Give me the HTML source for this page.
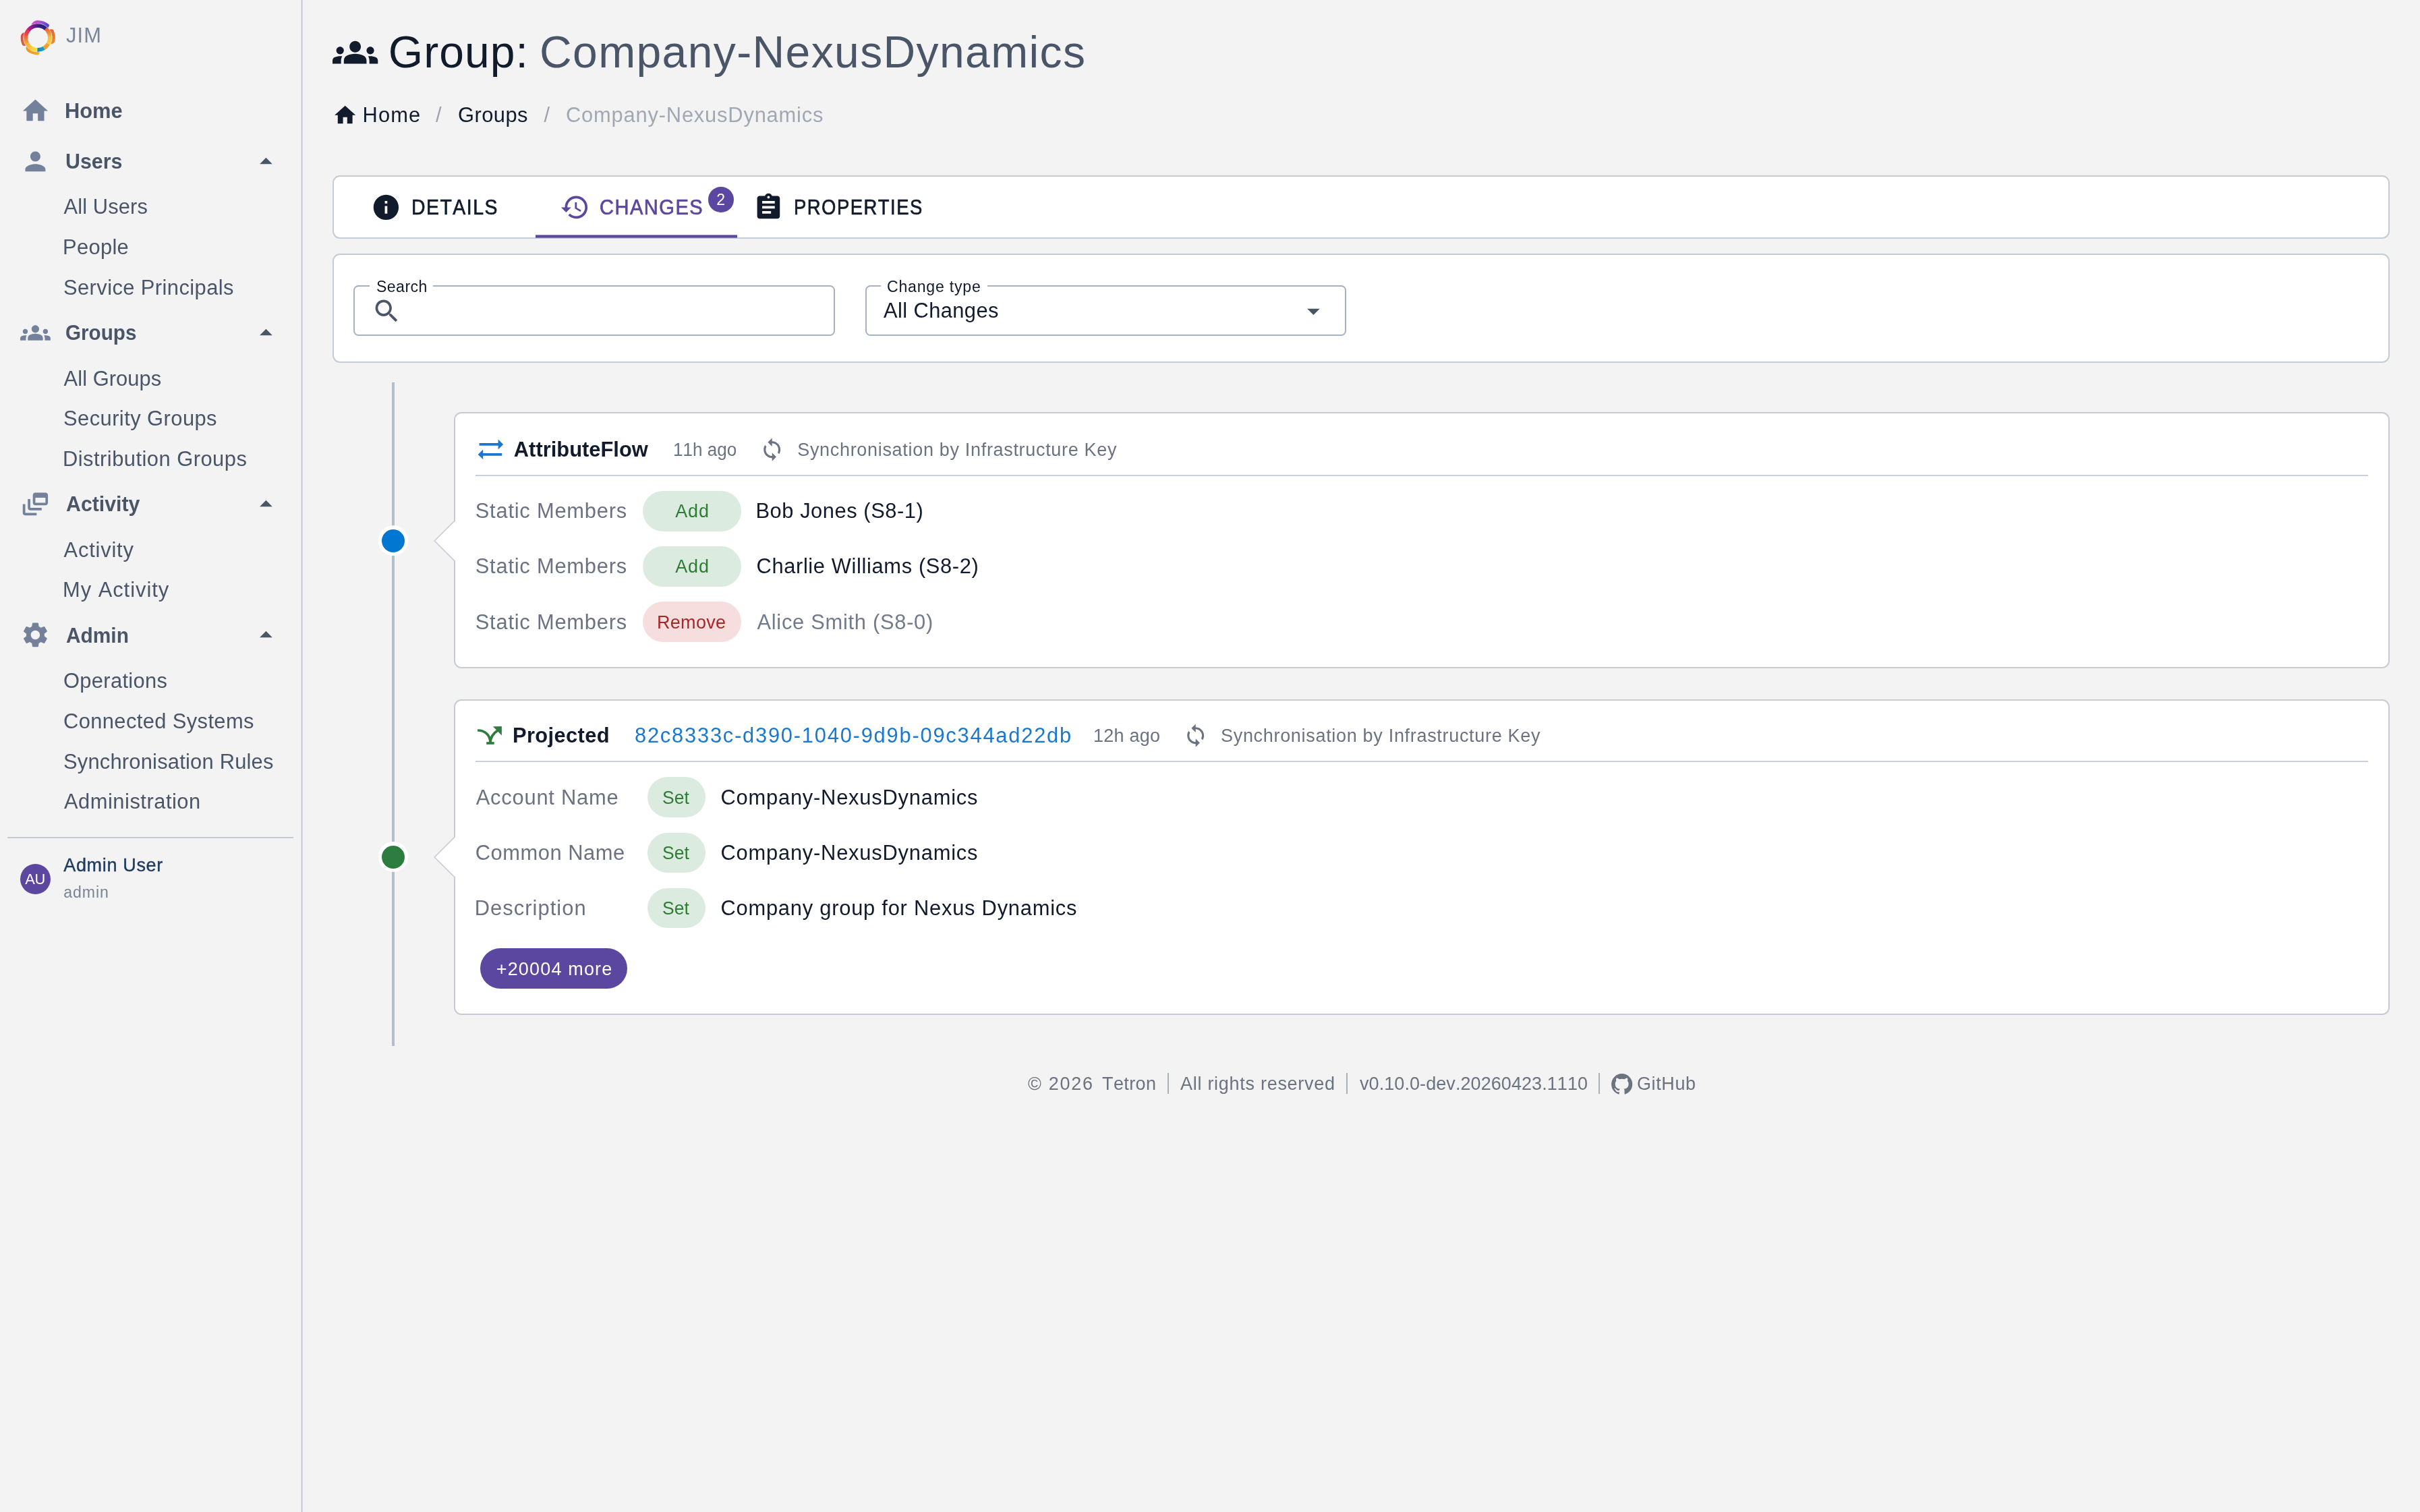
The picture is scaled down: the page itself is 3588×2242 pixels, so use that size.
<!DOCTYPE html><html lang="en"><head><meta charset="utf-8"><title>Group: Company-NexusDynamics - JIM</title><style>
html,body{margin:0;padding:0}
body{width:3588px;height:2242px;background:#f3f3f3;position:relative;overflow:hidden;font-family:"Liberation Sans",sans-serif;font-kerning:none}
#root{position:absolute;left:0;top:0;width:100%;height:100%;will-change:transform}
.a,.t,.i{position:absolute}
.t{white-space:nowrap;line-height:1;font-weight:400;transform-origin:0 0}
.b{font-weight:700}
.sb{-webkit-text-stroke:0.4px currentColor}
.tb{-webkit-text-stroke:0.7px currentColor}
.i{display:block;overflow:visible}
</style></head><body><div id="root">
<nav>
<div class="a" style="left:446.00px;top:0.00px;width:1.00px;height:2242.00px;background:rgba(190,197,210,0.38)"></div>
<div class="a" style="left:447.00px;top:0.00px;width:1.00px;height:2242.00px;background:#bec5d2"></div>
<div class="a" style="left:448.00px;top:0.00px;width:1.00px;height:2242.00px;background:rgba(190,197,210,0.48)"></div>
<div class="a" style="left:11.00px;top:1241.00px;width:424.00px;height:2.00px;background:#c4c9d4"></div>
<div class="a" style="left:29.90px;top:1281.00px;width:45.00px;height:45.00px;background:#5b47a0;border-radius:50%"></div>
<svg class="i" style="left:0;top:0" width="120" height="120" viewBox="0 0 120 120"><defs><linearGradient id="lg1" gradientUnits="userSpaceOnUse" x1="46.66" y1="36.86" x2="71.32" y2="41.20"><stop offset="0" stop-color="#e83cc6"/><stop offset="0.5" stop-color="#a456d6"/><stop offset="1" stop-color="#4c44c8"/></linearGradient><linearGradient id="lg2" gradientUnits="userSpaceOnUse" x1="73.53" y1="43.73" x2="75.23" y2="65.38"><stop offset="0" stop-color="#e2642f"/><stop offset="0.5" stop-color="#e8782c"/><stop offset="1" stop-color="#ef8c2c"/></linearGradient><linearGradient id="lg3" gradientUnits="userSpaceOnUse" x1="58.60" y1="77.14" x2="38.99" y2="68.82"><stop offset="0" stop-color="#f4a82c"/><stop offset="1" stop-color="#ee9228"/></linearGradient><linearGradient id="lg4" gradientUnits="userSpaceOnUse" x1="37.97" y1="67.71" x2="35.93" y2="48.30"><stop offset="0" stop-color="#da643a"/><stop offset="1" stop-color="#d74a3c"/></linearGradient><linearGradient id="lg5" gradientUnits="userSpaceOnUse" x1="40.50" y1="64.95" x2="42.49" y2="44.26"><stop offset="0" stop-color="#f4a838"/><stop offset="0.45" stop-color="#ee7040"/><stop offset="0.75" stop-color="#e93c4a"/><stop offset="1" stop-color="#e8354c"/></linearGradient><linearGradient id="lg6" gradientUnits="userSpaceOnUse" x1="55.38" y1="73.89" x2="40.50" y2="64.95"><stop offset="0" stop-color="#fce242"/><stop offset="0.5" stop-color="#f9cf3e"/><stop offset="1" stop-color="#f5b038"/></linearGradient><linearGradient id="lg7" gradientUnits="userSpaceOnUse" x1="65.49" y1="71.18" x2="55.38" y2="73.89"><stop offset="0" stop-color="#1fa3c4"/><stop offset="1" stop-color="#1487ba"/></linearGradient><linearGradient id="lg8" gradientUnits="userSpaceOnUse" x1="71.50" y1="64.95" x2="65.49" y2="71.18"><stop offset="0" stop-color="#f0a22c"/><stop offset="1" stop-color="#efa02c"/></linearGradient><linearGradient id="lg9" gradientUnits="userSpaceOnUse" x1="67.51" y1="42.29" x2="71.50" y2="64.95"><stop offset="0" stop-color="#e85c3c"/><stop offset="0.3" stop-color="#ef8a3a"/><stop offset="0.6" stop-color="#f7bf3c"/><stop offset="1" stop-color="#f8cc40"/></linearGradient><linearGradient id="lg10" gradientUnits="userSpaceOnUse" x1="42.09" y1="44.74" x2="67.74" y2="42.49"><stop offset="0" stop-color="#c4198c"/><stop offset="0.3" stop-color="#6a1e88"/><stop offset="0.65" stop-color="#2e2080"/><stop offset="1" stop-color="#2c2384"/></linearGradient></defs><path d="M46.66 36.86Q48.02 31.88 54.21 30.36A25.7 25.7 0 0 1 72.52 36.31Q73.61 37.70 71.32 41.20A21.1 21.1 0 0 0 46.66 36.86Z" fill="url(#lg1)"/><path d="M73.53 43.73Q77.58 42.41 78.99 44.29A25.8 25.8 0 0 1 81.24 61.36Q79.79 65.18 75.23 65.38A21.2 21.2 0 0 0 73.53 43.73Z" fill="url(#lg2)"/><path d="M58.60 77.14Q58.14 81.01 56.44 81.40A25.4 25.4 0 0 1 40.71 76.29Q37.52 72.99 38.99 68.82A21.1 21.1 0 0 0 58.60 77.14Z" fill="url(#lg3)"/><path d="M37.97 67.71Q34.39 68.58 33.07 66.69A25.3 25.3 0 0 1 30.89 52.92Q31.98 49.07 35.93 48.30A21.3 21.3 0 0 0 37.97 67.71Z" fill="url(#lg4)"/><path d="M40.50 64.95A17.9 17.9 0 0 1 42.49 44.26" stroke="url(#lg5)" stroke-width="5.8" fill="none"/><path d="M55.38 73.89A17.9 17.9 0 0 1 40.50 64.95" stroke="url(#lg6)" stroke-width="5.8" fill="none"/><path d="M65.49 71.18A17.9 17.9 0 0 1 55.38 73.89" stroke="url(#lg7)" stroke-width="5.8" fill="none"/><path d="M71.50 64.95A17.9 17.9 0 0 1 65.49 71.18" stroke="url(#lg8)" stroke-width="5.8" fill="none"/><path d="M67.51 42.29A17.9 17.9 0 0 1 71.50 64.95" stroke="url(#lg9)" stroke-width="5.8" fill="none"/><path d="M42.09 44.74A17.9 17.9 0 0 1 67.74 42.49" stroke="url(#lg10)" stroke-width="5.8" fill="none"/></svg>
<svg class="i" style="left:29.98px;top:142.02px" width="44.85" height="44.85" viewBox="0 0 24 24"><path fill="#73829a" d="M10 20v-6h4v6h5v-8h3L12 3 2 12h3v8z"/></svg>
<svg class="i" style="left:29.98px;top:216.77px" width="44.85" height="44.85" viewBox="0 0 24 24"><path fill="#73829a" d="M12 12c2.21 0 4-1.79 4-4s-1.79-4-4-4-4 1.79-4 4 1.79 4 4 4zm0 2c-2.67 0-8 1.34-8 4v2h16v-2c0-2.66-5.33-4-8-4z"/></svg>
<svg class="i" style="left:29.98px;top:470.92px" width="44.85" height="44.85" viewBox="0 0 24 24"><path fill="#73829a" d="M12 12.75c1.63 0 3.07.39 4.24.9 1.08.48 1.76 1.56 1.76 2.73V18H6v-1.61c0-1.18.68-2.26 1.76-2.73 1.17-.52 2.61-.91 4.24-.91zM4 13c1.1 0 2-.9 2-2s-.9-2-2-2-2 .9-2 2 .9 2 2 2zm1.13 1.1c-.37-.06-.74-.1-1.13-.1-.99 0-1.93.21-2.78.58C.48 14.9 0 15.62 0 16.43V18h4.5v-1.61c0-.83.23-1.61.63-2.29zM20 13c1.1 0 2-.9 2-2s-.9-2-2-2-2 .9-2 2 .9 2 2 2zm4 3.43c0-.81-.48-1.53-1.22-1.85-.85-.37-1.79-.58-2.78-.58-.39 0-.76.04-1.13.1.4.68.63 1.46.63 2.29V18H24v-1.57zM12 6c1.66 0 3 1.34 3 3s-1.34 3-3 3-3-1.34-3-3 1.34-3 3-3z"/></svg>
<svg class="i" style="left:29.98px;top:725.08px" width="44.85" height="44.85" viewBox="0 0 24 24"><path fill="#73829a" d="M8 8H6v7c0 1.1.9 2 2 2h9v-2H8V8zM20 3h-8c-1.1 0-2 .9-2 2v6c0 1.1.9 2 2 2h8c1.1 0 2-.9 2-2V5c0-1.1-.9-2-2-2zm0 8h-8V7h8v4zM4 12H2v7c0 1.1.9 2 2 2h9v-2H4v-7z"/></svg>
<svg class="i" style="left:29.98px;top:919.42px" width="44.85" height="44.85" viewBox="0 0 24 24"><path fill="#73829a" d="M19.14 12.94c.04-.3.06-.61.06-.94 0-.32-.02-.64-.07-.94l2.03-1.58c.18-.14.23-.41.12-.61l-1.92-3.32c-.12-.22-.37-.29-.59-.22l-2.39.96c-.5-.38-1.03-.7-1.62-.94l-.36-2.54c-.04-.24-.24-.41-.48-.41h-3.84c-.24 0-.43.17-.47.41l-.36 2.54c-.59.24-1.13.57-1.62.94l-2.39-.96c-.22-.08-.47 0-.59.22L2.74 8.87c-.12.21-.08.47.12.61l2.03 1.58c-.05.3-.09.63-.09.94s.02.64.07.94l-2.03 1.58c-.18.14-.23.41-.12.61l1.92 3.32c.12.22.37.29.59.22l2.39-.96c.5.38 1.03.7 1.62.94l.36 2.54c.05.24.24.41.48.41h3.84c.24 0 .44-.17.47-.41l.36-2.54c.59-.24 1.13-.56 1.62-.94l2.39.96c.22.08.47 0 .59-.22l1.92-3.32c.12-.22.07-.47-.12-.61l-2.01-1.58zM12 15.6c-1.98 0-3.6-1.62-3.6-3.6s1.62-3.6 3.6-3.6 3.6 1.62 3.6 3.6-1.62 3.6-3.6 3.6z"/></svg>
<svg class="i" style="left:371.88px;top:216.77px" width="44.85" height="44.85" viewBox="0 0 24 24"><path fill="#4a5568" d="M7 14l5-5 5 5z"/></svg>
<svg class="i" style="left:371.88px;top:470.92px" width="44.85" height="44.85" viewBox="0 0 24 24"><path fill="#4a5568" d="M7 14l5-5 5 5z"/></svg>
<svg class="i" style="left:371.88px;top:725.08px" width="44.85" height="44.85" viewBox="0 0 24 24"><path fill="#4a5568" d="M7 14l5-5 5 5z"/></svg>
<svg class="i" style="left:371.88px;top:919.42px" width="44.85" height="44.85" viewBox="0 0 24 24"><path fill="#4a5568" d="M7 14l5-5 5 5z"/></svg>
<span class="t" style="left:98.00px;top:38.00px;font-size:30.86px;letter-spacing:1.148px;color:#7a869a">JIM</span>
<span class="t b" style="left:96.10px;top:150.00px;font-size:30.86px;letter-spacing:-0.092px;color:#4a5568">Home</span>
<span class="t b" style="left:97.11px;top:225.00px;font-size:30.86px;letter-spacing:0.000px;color:#4a5568;transform:scaleX(0.9854)">Users</span>
<span class="t b" style="left:97.14px;top:479.00px;font-size:30.86px;letter-spacing:0.000px;color:#4a5568;transform:scaleX(0.9604)">Groups</span>
<span class="t b" style="left:98.10px;top:733.00px;font-size:30.86px;letter-spacing:0.000px;color:#4a5568;transform:scaleX(0.9819)">Activity</span>
<span class="t b" style="left:98.10px;top:928.00px;font-size:30.86px;letter-spacing:0.000px;color:#4a5568;transform:scaleX(0.9676)">Admin</span>
<span class="t" style="left:94.60px;top:292.00px;font-size:30.86px;letter-spacing:0.097px;color:#4a5568">All Users</span>
<span class="t" style="left:93.00px;top:352.00px;font-size:30.86px;letter-spacing:0.335px;color:#4a5568">People</span>
<span class="t" style="left:94.00px;top:412.00px;font-size:30.86px;letter-spacing:0.422px;color:#4a5568">Service Principals</span>
<span class="t" style="left:94.60px;top:547.00px;font-size:30.86px;letter-spacing:0.052px;color:#4a5568">All Groups</span>
<span class="t" style="left:94.00px;top:606.00px;font-size:30.86px;letter-spacing:0.449px;color:#4a5568">Security Groups</span>
<span class="t" style="left:93.00px;top:666.00px;font-size:30.86px;letter-spacing:0.483px;color:#4a5568">Distribution Groups</span>
<span class="t" style="left:94.60px;top:801.00px;font-size:30.86px;letter-spacing:0.785px;color:#4a5568">Activity</span>
<span class="t" style="left:93.00px;top:860.00px;font-size:30.86px;letter-spacing:0.979px;color:#4a5568">My Activity</span>
<span class="t" style="left:94.00px;top:995.00px;font-size:30.86px;letter-spacing:0.331px;color:#4a5568">Operations</span>
<span class="t" style="left:94.00px;top:1055.00px;font-size:30.86px;letter-spacing:0.392px;color:#4a5568">Connected Systems</span>
<span class="t" style="left:94.00px;top:1115.00px;font-size:30.86px;letter-spacing:0.219px;color:#4a5568">Synchronisation Rules</span>
<span class="t" style="left:95.00px;top:1174.00px;font-size:30.86px;letter-spacing:0.511px;color:#4a5568">Administration</span>
<span class="t sb" style="left:94.30px;top:1270.00px;font-size:27.0px;letter-spacing:0.650px;color:#1e3a5f">Admin User</span>
<span class="t" style="left:94.30px;top:1312.00px;font-size:23.1px;letter-spacing:0.886px;color:#7a8495">admin</span>
<span class="t" style="left:37.20px;top:1293.00px;font-size:21.8px;letter-spacing:-0.138px;color:#ffffff">AU</span>
</nav>
<header>
<svg class="i" style="left:493.36px;top:43.76px" width="67.27" height="67.27" viewBox="0 0 24 24"><path fill="#111b2b" d="M12 12.75c1.63 0 3.07.39 4.24.9 1.08.48 1.76 1.56 1.76 2.73V18H6v-1.61c0-1.18.68-2.26 1.76-2.73 1.17-.52 2.61-.91 4.24-.91zM4 13c1.1 0 2-.9 2-2s-.9-2-2-2-2 .9-2 2 .9 2 2 2zm1.13 1.1c-.37-.06-.74-.1-1.13-.1-.99 0-1.93.21-2.78.58C.48 14.9 0 15.62 0 16.43V18h4.5v-1.61c0-.83.23-1.61.63-2.29zM20 13c1.1 0 2-.9 2-2s-.9-2-2-2-2 .9-2 2 .9 2 2 2zm4 3.43c0-.81-.48-1.53-1.22-1.85-.85-.37-1.79-.58-2.78-.58-.39 0-.76.04-1.13.1.4.68.63 1.46.63 2.29V18H24v-1.57zM12 6c1.66 0 3 1.34 3 3s-1.34 3-3 3-3-1.34-3-3 1.34-3 3-3z"/></svg>
<svg class="i" style="left:493.31px;top:152.31px" width="37.38" height="37.38" viewBox="0 0 24 24"><path fill="#111b2b" d="M10 20v-6h4v6h5v-8h3L12 3 2 12h3v8z"/></svg>
<span class="t" style="left:575.75px;top:44.00px;font-size:66.0px;letter-spacing:1.063px;color:#111b2b">Group:</span>
<span class="t" style="left:800.00px;top:44.00px;font-size:66.0px;letter-spacing:1.388px;color:#4a5568">Company-NexusDynamics</span>
<span class="t" style="left:537.50px;top:156.00px;font-size:30.86px;letter-spacing:1.115px;color:#111b2b">Home</span>
<span class="t" style="left:646.00px;top:156.00px;font-size:30.86px;letter-spacing:0.000px;color:#a0a3ac">/</span>
<span class="t" style="left:679.00px;top:156.00px;font-size:30.86px;letter-spacing:0.447px;color:#111b2b">Groups</span>
<span class="t" style="left:806.50px;top:156.00px;font-size:30.86px;letter-spacing:0.000px;color:#a0a3ac">/</span>
<span class="t" style="left:839.00px;top:156.00px;font-size:30.86px;letter-spacing:0.807px;color:#a2a8b3">Company-NexusDynamics</span>
</header>
<main>
<div class="a" style="left:493.00px;top:260.00px;width:3050.00px;height:94.00px;background:#fff;border:2px solid #c7cbd3;border-radius:11px;box-sizing:border-box"></div>
<div class="a" style="left:794.00px;top:348.00px;width:299.00px;height:1.00px;background:rgba(91,71,160,0.6)"></div>
<div class="a" style="left:794.00px;top:349.00px;width:299.00px;height:3.00px;background:#5b47a0"></div>
<div class="a" style="left:794.00px;top:352.00px;width:299.00px;height:1.00px;background:rgba(91,71,160,0.6)"></div>
<div class="a" style="left:1050.20px;top:277.40px;width:37.60px;height:37.60px;background:#5b47a0;border-radius:50%"></div>
<div class="a" style="left:493.00px;top:376.00px;width:3050.00px;height:162.00px;background:#fff;border:2px solid #c7cbd3;border-radius:11px;box-sizing:border-box"></div>
<div class="a" style="left:524.00px;top:423.00px;width:714.00px;height:75.00px;border:2px solid #a9b1bf;border-radius:7.5px;box-sizing:border-box"></div><div class="a" style="left:547.50px;top:422.00px;width:94.50px;height:4.00px;background:#fff"></div>
<div class="a" style="left:1283.00px;top:423.00px;width:713.00px;height:75.00px;border:2px solid #a9b1bf;border-radius:7.5px;box-sizing:border-box"></div><div class="a" style="left:1305.60px;top:422.00px;width:158.40px;height:4.00px;background:#fff"></div>
<div class="a" style="left:581.10px;top:567.00px;width:3.90px;height:983.60px;background:#b4bdca"></div>
<div class="a" style="left:560.60px;top:779.10px;width:44.80px;height:44.80px;background:#fff;border-radius:50%"></div>
<div class="a" style="left:566.00px;top:784.50px;width:34.00px;height:34.00px;background:#0277d1;border-radius:50%"></div>
<div class="a" style="left:560.60px;top:1248.40px;width:44.80px;height:44.80px;background:#fff;border-radius:50%"></div>
<div class="a" style="left:566.00px;top:1253.80px;width:34.00px;height:34.00px;background:#2e7d40;border-radius:50%"></div>
<div class="a" style="left:673.00px;top:611.00px;width:2870.00px;height:380.00px;background:#fff;border:2px solid #c7cbd3;border-radius:11px;box-sizing:border-box"></div>
<div class="a" style="left:673.00px;top:1037.00px;width:2870.00px;height:468.00px;background:#fff;border:2px solid #c7cbd3;border-radius:11px;box-sizing:border-box"></div>
<svg class="i" style="left:640px;top:767.70px" width="40" height="68" viewBox="0 0 40 68"><path d="M35.6 3.2 L4.6 34 L35.6 64.8 Z" fill="#fff"/><path d="M34.6 3.6 L4.2 34 L34.6 64.4" fill="none" stroke="#c7cbd3" stroke-width="1.5"/></svg>
<svg class="i" style="left:640px;top:1237.30px" width="40" height="68" viewBox="0 0 40 68"><path d="M35.6 3.2 L4.6 34 L35.6 64.8 Z" fill="#fff"/><path d="M34.6 3.6 L4.2 34 L34.6 64.4" fill="none" stroke="#c7cbd3" stroke-width="1.5"/></svg>
<div class="a" style="left:705.00px;top:704.00px;width:2806.00px;height:2.00px;background:#cbd0da"></div>
<div class="a" style="left:705.00px;top:1128.00px;width:2806.00px;height:2.00px;background:#cbd0da"></div>
<div class="a" style="left:953.00px;top:727.80px;width:145.70px;height:59.80px;background:#dcebe0;border-radius:30px"></div>
<div class="a" style="left:953.00px;top:810.00px;width:145.70px;height:59.80px;background:#dcebe0;border-radius:30px"></div>
<div class="a" style="left:953.00px;top:892.20px;width:145.70px;height:59.80px;background:#f6dede;border-radius:30px"></div>
<div class="a" style="left:959.60px;top:1152.40px;width:86.60px;height:59.80px;background:#dcebe0;border-radius:30px"></div>
<div class="a" style="left:959.60px;top:1234.50px;width:86.60px;height:59.80px;background:#dcebe0;border-radius:30px"></div>
<div class="a" style="left:959.60px;top:1316.60px;width:86.60px;height:59.80px;background:#dcebe0;border-radius:30px"></div>
<div class="a" style="left:712.00px;top:1406.10px;width:218.00px;height:59.80px;background:#5b47a0;border-radius:30px"></div>
<svg class="i" style="left:700px;top:1066px" width="56" height="48" viewBox="700 1066 56 48"><g fill="none" stroke="#2e7d3e" stroke-width="3.7"><path d="M708.1 1083 C719 1083 726.9 1090 726.9 1101"/><path d="M726.9 1101 C727.2 1093 731 1087.5 738.5 1082.6"/><path d="M721.2 1102 H732.7"/></g><path fill="#2e7d3e" d="M730.9 1077.2 L743.9 1077.1 L743.9 1090.4 Z"/></svg>
<svg class="i" style="left:550.33px;top:284.97px" width="44.85" height="44.85" viewBox="0 0 24 24"><path fill="#111b2b" d="M12 2C6.48 2 2 6.48 2 12s4.48 10 10 10 10-4.48 10-10S17.52 2 12 2zm1 15h-2v-6h2v6zm0-8h-2V7h2v2z"/></svg>
<svg class="i" style="left:829.78px;top:284.97px" width="44.85" height="44.85" viewBox="0 0 24 24"><path fill="#5b47a0" d="M13 3c-4.97 0-9 4.03-9 9H1l3.89 3.89.07.14L9 12H6c0-3.87 3.13-7 7-7s7 3.13 7 7-3.13 7-7 7c-1.93 0-3.68-.79-4.94-2.06l-1.42 1.42C8.27 19.99 10.51 21 13 21c4.97 0 9-4.03 9-9s-4.03-9-9-9zm-1 5v5l4.28 2.54.72-1.21-3.5-2.08V8H12z"/></svg>
<svg class="i" style="left:1116.58px;top:284.97px" width="44.85" height="44.85" viewBox="0 0 24 24"><path fill="#111b2b" d="M19 3h-4.18C14.4 1.84 13.3 1 12 1c-1.3 0-2.4.84-2.82 2H5c-1.1 0-2 .9-2 2v14c0 1.1.9 2 2 2h14c1.1 0 2-.9 2-2V5c0-1.1-.9-2-2-2zm-7 0c.55 0 1 .45 1 1s-.45 1-1 1-1-.45-1-1 .45-1 1-1zm2 14H7v-2h7v2zm3-4H7v-2h10v2zm0-4H7V7h10v2z"/></svg>
<svg class="i" style="left:551.08px;top:438.57px" width="44.85" height="44.85" viewBox="0 0 24 24"><path fill="#4a5568" d="M15.5 14h-.79l-.28-.27C15.41 12.59 16 11.11 16 9.5 16 5.91 13.09 3 9.5 3S3 5.91 3 9.5 5.91 16 9.5 16c1.61 0 3.09-.59 4.23-1.57l.27.28v.79l5 4.99L20.49 19l-4.99-5zm-6 0C7.01 14 5 11.99 5 9.5S7.01 5 9.5 5 14 7.01 14 9.5 11.99 14 9.5 14z"/></svg>
<svg class="i" style="left:1924.58px;top:438.57px" width="44.85" height="44.85" viewBox="0 0 24 24"><path fill="#4a5568" d="M7 10l5 5 5-5z"/></svg>
<svg class="i" style="left:704.58px;top:643.78px" width="44.85" height="44.85" viewBox="0 0 24 24"><path fill="#1976d2" d="M22 8l-4-4v3H3v2h15v3l4-4zM2 16l4 4v-3h15v-2H6v-3l-4 4z"/></svg>
<svg class="i" style="left:1125.81px;top:647.71px" width="37.38" height="37.38" viewBox="0 0 24 24"><path fill="#6b7280" d="M12 4V1L8 5l4 4V6c3.31 0 6 2.69 6 6 0 1.01-.25 1.97-.7 2.8l1.46 1.46C19.54 15.03 20 13.57 20 12c0-4.42-3.58-8-8-8zm0 14c-3.31 0-6-2.69-6-6 0-1.01.25-1.97.7-2.8L5.24 7.74C4.46 8.97 4 10.43 4 12c0 4.42 3.58 8 8 8v3l4-4-4-4v3z"/></svg>
<svg class="i" style="left:1753.81px;top:1071.91px" width="37.38" height="37.38" viewBox="0 0 24 24"><path fill="#6b7280" d="M12 4V1L8 5l4 4V6c3.31 0 6 2.69 6 6 0 1.01-.25 1.97-.7 2.8l1.46 1.46C19.54 15.03 20 13.57 20 12c0-4.42-3.58-8-8-8zm0 14c-3.31 0-6-2.69-6-6 0-1.01.25-1.97.7-2.8L5.24 7.74C4.46 8.97 4 10.43 4 12c0 4.42 3.58 8 8 8v3l4-4-4-4v3z"/></svg>
<span class="t tb" style="left:610.16px;top:293.00px;font-size:30.86px;letter-spacing:1.630px;color:#111b2b;transform:scaleX(0.9204)">DETAILS</span>
<span class="t tb" style="left:889.06px;top:293.00px;font-size:30.86px;letter-spacing:1.593px;color:#5b47a0;transform:scaleX(0.9419)">CHANGES</span>
<span class="t" style="left:1062.30px;top:285.00px;font-size:23.1px;letter-spacing:0.000px;color:#ffffff">2</span>
<span class="t tb" style="left:1176.52px;top:293.00px;font-size:30.86px;letter-spacing:1.688px;color:#111b2b;transform:scaleX(0.8888)">PROPERTIES</span>
<span class="t" style="left:558.00px;top:414.00px;font-size:23.1px;letter-spacing:0.434px;color:#111b2b">Search</span>
<span class="t" style="left:1315.00px;top:414.00px;font-size:23.1px;letter-spacing:0.788px;color:#111b2b">Change type</span>
<span class="t" style="left:1310.00px;top:446.00px;font-size:30.86px;letter-spacing:0.403px;color:#111b2b">All Changes</span>
<span class="t b" style="left:761.80px;top:652.00px;font-size:30.86px;letter-spacing:0.010px;color:#111b2b">AttributeFlow</span>
<span class="t" style="left:998.07px;top:654.00px;font-size:27.0px;letter-spacing:0.000px;color:#6b7280;transform:scaleX(0.9648)">11h ago</span>
<span class="t" style="left:1182.25px;top:654.00px;font-size:27.0px;letter-spacing:0.681px;color:#6b7280">Synchronisation by Infrastructure Key</span>
<span class="t" style="left:704.75px;top:743.00px;font-size:30.86px;letter-spacing:0.775px;color:#6b7280">Static Members</span>
<span class="t" style="left:704.75px;top:825.00px;font-size:30.86px;letter-spacing:0.775px;color:#6b7280">Static Members</span>
<span class="t" style="left:704.75px;top:908.00px;font-size:30.86px;letter-spacing:0.775px;color:#6b7280">Static Members</span>
<span class="t" style="left:1001.25px;top:745.00px;font-size:27.0px;letter-spacing:0.863px;color:#2e7d32">Add</span>
<span class="t" style="left:1001.25px;top:827.00px;font-size:27.0px;letter-spacing:0.863px;color:#2e7d32">Add</span>
<span class="t" style="left:974.00px;top:910.00px;font-size:27.0px;letter-spacing:0.296px;color:#a82828">Remove</span>
<span class="t" style="left:1120.50px;top:743.00px;font-size:30.86px;letter-spacing:0.542px;color:#111b2b">Bob Jones (S8-1)</span>
<span class="t" style="left:1121.50px;top:825.00px;font-size:30.86px;letter-spacing:0.626px;color:#111b2b">Charlie Williams (S8-2)</span>
<span class="t" style="left:1122.50px;top:908.00px;font-size:30.86px;letter-spacing:0.713px;color:#727b8b">Alice Smith (S8-0)</span>
<span class="t b" style="left:760.00px;top:1076.00px;font-size:30.86px;letter-spacing:0.371px;color:#111b2b">Projected</span>
<span class="t" style="left:941.00px;top:1076.00px;font-size:30.86px;letter-spacing:1.773px;color:#1a78d0">82c8333c-d390-1040-9d9b-09c344ad22db</span>
<span class="t" style="left:1621.00px;top:1078.00px;font-size:27.0px;letter-spacing:0.236px;color:#6b7280">12h ago</span>
<span class="t" style="left:1810.00px;top:1078.00px;font-size:27.0px;letter-spacing:0.688px;color:#6b7280">Synchronisation by Infrastructure Key</span>
<span class="t" style="left:705.75px;top:1168.00px;font-size:30.86px;letter-spacing:0.774px;color:#6b7280">Account Name</span>
<span class="t" style="left:704.75px;top:1250.00px;font-size:30.86px;letter-spacing:0.534px;color:#6b7280">Common Name</span>
<span class="t" style="left:703.75px;top:1332.00px;font-size:30.86px;letter-spacing:1.056px;color:#6b7280">Description</span>
<span class="t" style="left:982.27px;top:1170.00px;font-size:27.0px;letter-spacing:0.000px;color:#2e7d32;transform:scaleX(0.9806)">Set</span>
<span class="t" style="left:982.27px;top:1252.00px;font-size:27.0px;letter-spacing:0.000px;color:#2e7d32;transform:scaleX(0.9806)">Set</span>
<span class="t" style="left:982.27px;top:1334.00px;font-size:27.0px;letter-spacing:0.000px;color:#2e7d32;transform:scaleX(0.9806)">Set</span>
<span class="t" style="left:1068.50px;top:1168.00px;font-size:30.86px;letter-spacing:0.782px;color:#111b2b">Company-NexusDynamics</span>
<span class="t" style="left:1068.50px;top:1250.00px;font-size:30.86px;letter-spacing:0.782px;color:#111b2b">Company-NexusDynamics</span>
<span class="t" style="left:1068.50px;top:1332.00px;font-size:30.86px;letter-spacing:0.764px;color:#111b2b">Company group for Nexus Dynamics</span>
<span class="t" style="left:735.75px;top:1424.00px;font-size:27.0px;letter-spacing:1.165px;color:#ffffff">+20004 more</span>
</main>
<footer>
<div class="a" style="left:1731.00px;top:1591.00px;width:2.00px;height:31.00px;background:#a9b0bc"></div>
<div class="a" style="left:1996.00px;top:1591.00px;width:2.00px;height:31.00px;background:#a9b0bc"></div>
<div class="a" style="left:2370.00px;top:1591.00px;width:2.00px;height:31.00px;background:#a9b0bc"></div>
<svg class="i" style="left:2385.81px;top:1588.61px" width="37.38" height="37.38" viewBox="0 0 24 24"><path fill="#6b7280" d="M12 2A10 10 0 0 0 2 12c0 4.42 2.87 8.17 6.84 9.5.5.08.66-.23.66-.5v-1.69c-2.77.6-3.36-1.34-3.36-1.34-.46-1.16-1.11-1.47-1.11-1.47-.91-.62.07-.6.07-.6 1 .07 1.53 1.03 1.53 1.03.87 1.52 2.34 1.07 2.91.83.09-.65.35-1.09.63-1.34-2.22-.25-4.55-1.11-4.55-4.92 0-1.11.38-2 1.03-2.71-.1-.25-.45-1.29.1-2.64 0 0 .84-.27 2.75 1.02.79-.22 1.65-.33 2.5-.33.85 0 1.71.11 2.5.33 1.91-1.29 2.75-1.02 2.75-1.02.55 1.35.2 2.39.1 2.64.65.71 1.03 1.6 1.03 2.71 0 3.82-2.34 4.66-4.57 4.91.36.31.69.92.69 1.85V21c0 .27.16.59.67.5C19.14 20.16 22 16.42 22 12A10 10 0 0 0 12 2z"/></svg>
<span class="t" style="left:1524.00px;top:1594.00px;font-size:27.0px;letter-spacing:1.711px;color:#6b7280">© 2026</span>
<span class="t" style="left:1634.00px;top:1594.00px;font-size:27.0px;letter-spacing:0.396px;color:#6b7280">Tetron</span>
<span class="t" style="left:1750.00px;top:1594.00px;font-size:27.0px;letter-spacing:0.719px;color:#6b7280">All rights reserved</span>
<span class="t" style="left:2016.00px;top:1594.00px;font-size:27.0px;letter-spacing:0.072px;color:#6b7280">v0.10.0-dev.20260423.1110</span>
<span class="t" style="left:2427.00px;top:1594.00px;font-size:27.0px;letter-spacing:0.597px;color:#6b7280">GitHub</span>
</footer>
</div></body></html>
